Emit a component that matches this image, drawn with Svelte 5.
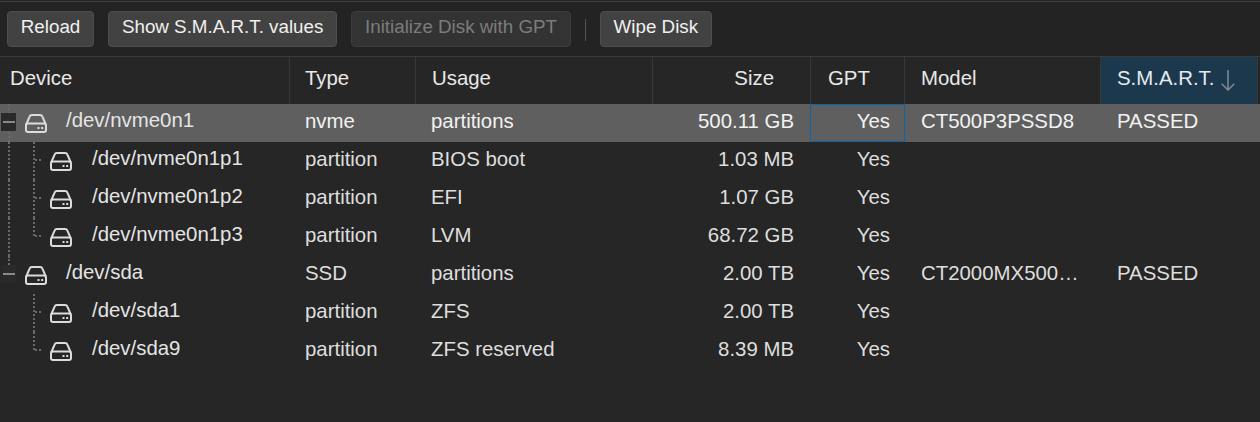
<script>
	const columns = [
		{ label: 'Device', cls: '' },
		{ label: 'Type', cls: '' },
		{ label: 'Usage', cls: 'usage' },
		{ label: 'Size', cls: 'right' },
		{ label: 'GPT', cls: 'gpt-head' },
		{ label: 'Model', cls: 'inset' }
	];

	const disks = [
		{ name: '/dev/nvme0n1', level: 0, guide: 'open', type: 'nvme', usage: 'partitions', size: '500.11 GB', model: 'CT500P3PSSD8', smart: 'PASSED', selected: true },
		{ name: '/dev/nvme0n1p1', level: 1, guide: 'mid', parentLine: true, type: 'partition', usage: 'BIOS boot', size: '1.03 MB' },
		{ name: '/dev/nvme0n1p2', level: 1, guide: 'mid', parentLine: true, type: 'partition', usage: 'EFI', size: '1.07 GB' },
		{ name: '/dev/nvme0n1p3', level: 1, guide: 'end', parentLine: true, type: 'partition', usage: 'LVM', size: '68.72 GB' },
		{ name: '/dev/sda', level: 0, guide: 'last', type: 'SSD', usage: 'partitions', size: '2.00 TB', model: 'CT2000MX500SSD1', smart: 'PASSED' },
		{ name: '/dev/sda1', level: 1, guide: 'mid', type: 'partition', usage: 'ZFS', size: '2.00 TB' },
		{ name: '/dev/sda9', level: 1, guide: 'end', type: 'partition', usage: 'ZFS reserved', size: '8.39 MB' }
	];
</script>

<div class="panel">
	<div class="toolbar">
		<button class="btn">Reload</button>
		<button class="btn">Show S.M.A.R.T. values</button>
		<button class="btn disabled" disabled>Initialize Disk with GPT</button>
		<span class="sep"></span>
		<button class="btn">Wipe Disk</button>
	</div>

	<div class="grid head">
		{#each columns as col}
			<div class="hcell {col.cls}">{col.label}</div>
		{/each}
		<div class="hcell sorted">
			S.M.A.R.T.
			<svg class="arrow" width="14" height="21" viewBox="0 0 14 21" fill="none" stroke="#7f8b94" stroke-width="1.5">
				<path d="M7 0v20M.7 13.7 7 20l6.3-6.3" />
			</svg>
		</div>
	</div>

	{#each disks as disk}
		<div class="grid row" class:selected={disk.selected}>
			<div class="cell device">
				<span class="guide g0" class:through={disk.level === 1 && disk.parentLine} class:root-open={disk.guide === 'open'} class:root-last={disk.guide === 'last'}>
					{#if disk.level === 0}
						<span class="toggle"><span class="minus"></span></span>
					{/if}
				</span>
				{#if disk.level === 1}
					<span class="guide g1" class:end={disk.guide === 'end'}><span class="tick"></span></span>
				{/if}
				<svg class="drive" width="22" height="19" viewBox="0 0 22 19" fill="none" stroke="#dcdcdc" stroke-width="2">
					<path d="M1.2 10.5 4.6 2.6A2.5 2.5 0 0 1 6.9 1h8.2a2.5 2.5 0 0 1 2.3 1.6l3.4 7.9" />
					<rect x="1" y="9.5" width="20" height="8.5" rx="2" />
					<path d="M12.5 14h2M16.2 14h2" />
				</svg>
				<span class="name" class:child={disk.level === 1}>{disk.name}</span>
			</div>
			<div class="cell">{disk.type}</div>
			<div class="cell">{disk.usage}</div>
			<div class="cell right size">{disk.size}</div>
			<div class="cell right gpt" class:focus={disk.selected}>Yes</div>
			<div class="cell inset ellipsis">{disk.model ?? ''}</div>
			<div class="cell inset">{disk.smart ?? ''}</div>
		</div>
	{/each}
</div>

<style>
	:global(body) {
		background: #262626;
		overflow: hidden;
	}
	.panel {
		height: 422px;
		background: #262626;
		color: #e8e8e8;
		font-family: 'Liberation Sans', Arial, sans-serif;
		font-size: 20.4px;
	}
	.toolbar {
		display: flex;
		align-items: flex-start;
		box-sizing: border-box;
		height: 56px;
		padding: 9px 0 0 7px;
		gap: 14px;
		border-top: 1px solid #3f3f3f;
		margin-top: 1px;
		border-bottom: 1px solid #3a3a3a;
		background: #232323;
	}
	.btn {
		height: 36px;
		padding: 0 12.8px 5px;
		margin: 0;
		border: 1px solid #4e4e4e;
		border-radius: 4px;
		background: #424242;
		color: #f0f0f0;
		font-family: inherit;
		font-size: 18.8px;
		line-height: 30px;
	}
	.btn.disabled {
		background: #333;
		border-color: #3d3d3d;
		color: #7c7c7c;
	}
	.sep {
		width: 1px;
		height: 22px;
		margin-top: 8px;
		background: #555;
	}
	.grid {
		display: grid;
		grid-template-columns: 290px 126px 237px 158px 94px 196px 157px;
	}
	.head {
		height: 47px;
	}
	.hcell {
		display: flex;
		align-items: center;
		padding: 0 15px 5px;
		border-right: 1px solid #383838;
		line-height: 1;
	}
	.hcell:first-child {
		padding-left: 10px;
	}
	.hcell.usage,
	.hcell.inset {
		padding-left: 16px;
	}
	.hcell.gpt-head {
		padding-left: 17px;
	}
	.hcell.right {
		justify-content: flex-end;
		padding-right: 36px;
	}
	.hcell.sorted {
		background: #1c384d;
		gap: 7px;
		padding-left: 16px;
		color: #e4ebf0;
	}
	.arrow {
		margin-top: 5px;
		flex: none;
	}
	.row {
		height: 38px;
		line-height: 34px;
		color: #dedede;
	}
	.row.selected {
		background: #5f5f5f;
		color: #f2f2f2;
	}
	.cell {
		padding: 0 15px;
		white-space: nowrap;
		box-sizing: border-box;
		height: 38px;
	}
	.cell.inset {
		padding-left: 16px;
	}
	.right {
		text-align: right;
	}
	.size {
		padding-right: 17px;
	}
	.ellipsis {
		overflow: hidden;
		text-overflow: ellipsis;
		padding-right: 18px;
	}
	.gpt.focus {
		margin-left: -1px;
		border: 1px solid #0b65a8;
		line-height: 32px;
		padding-right: 14px;
	}
	.device {
		display: flex;
		align-items: center;
		padding: 0;
		height: 38px;
	}
	.guide {
		position: relative;
		display: block;
		width: 25px;
		height: 38px;
		flex: none;
	}
	.g0.through::before,
	.g0.root-open::before,
	.g1::before {
		content: '';
		position: absolute;
		top: 0;
		bottom: 0;
		border-left: 2px dotted #6a6a6a;
	}
	.g0::before {
		left: 8px;
	}
	.g0.root-last::before {
		content: '';
		position: absolute;
		left: 8px;
		top: 0;
		height: 9px;
		border-left: 2px dotted #6a6a6a;
	}
	.g1::before {
		left: 8px;
	}
	.g1.end::before {
		bottom: 20px;
	}
	.tick {
		position: absolute;
		left: 10px;
		top: 17px;
		width: 6px;
		border-top: 2px dotted #6a6a6a;
	}
	.toggle {
		position: absolute;
		left: 1px;
		top: 9px;
		width: 15px;
		height: 18px;
		background: #2a2a2a;
		display: flex;
		align-items: center;
		justify-content: center;
	}
	.minus {
		width: 12px;
		height: 2px;
		background: #8a8a8a;
	}
	.drive {
		flex: none;
		margin-top: 1px;
	}
	.name {
		margin-left: 19px;
		position: relative;
		top: -3px;
		color: #e4e4e4;
	}
	.name.child {
		margin-left: 20px;
	}
</style>
